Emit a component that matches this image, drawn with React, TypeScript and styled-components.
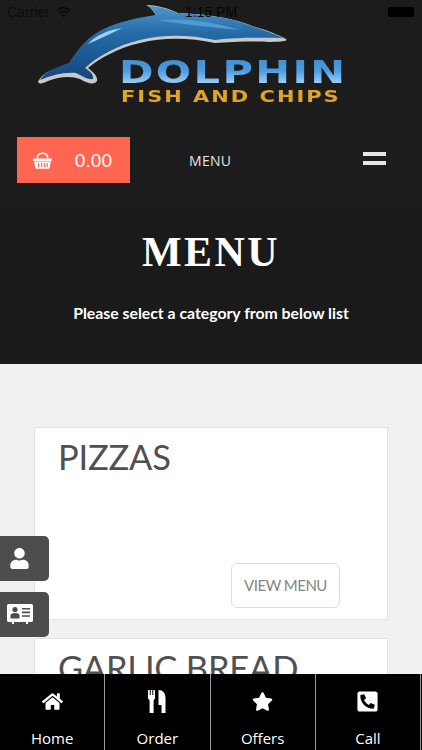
import React from "react";
import styled, { createGlobalStyle } from "styled-components";
import { FaHome, FaStar, FaUser, FaPhoneSquare } from "react-icons/fa";

const GlobalStyle = createGlobalStyle`
    html, body {
        margin: 0;
        padding: 0;
        background: #f1f1f1;
    }
    * {
        box-sizing: border-box;
    }
`;

const Page = styled.div`
    position: relative;
    width: 422px;
    height: 750px;
    overflow: hidden;
    font-family: Lato, "Liberation Sans", sans-serif;
`;

const StatusBar = styled.div`
    position: absolute;
    top: 0;
    left: 0;
    right: 0;
    height: 22px;
    display: grid;
    grid-template-columns: 1fr auto 1fr;
    align-items: center;
    padding: 2px 7px 0 7px;
    color: #050505;
    font-family: "Liberation Sans", sans-serif;
    font-size: 14px;
    z-index: 2;
`;

const Carrier = styled.div`
    display: flex;
    align-items: center;
    gap: 6px;
    color: #0c0c0c;
`;

const Battery = styled.div`
    justify-self: end;
    width: 26px;
    height: 10px;
    margin-right: 1px;
    background: #000;
    border-radius: 2px;
`;

const Header = styled.header`
    background: #1c1c1c;
    height: 206px;
    display: flex;
    flex-direction: column;
`;

const LogoArea = styled.div`
    position: relative;
    height: 137px;
    flex: none;
`;

const Dolphin = styled.svg`
    position: absolute;
    left: 34px;
    top: 0;
`;

const LogoName = styled.div`
    position: absolute;
    left: 119px;
    top: 57px;
    font-family: "DejaVu Sans", sans-serif;
    font-weight: 700;
    font-size: 32px;
    line-height: 30px;
    letter-spacing: 1.8px;
    white-space: nowrap;
    transform: scaleX(1.3);
    transform-origin: left center;
    background: linear-gradient(#3f8fd0, #4a9be0 45%, #b7dcf8);
    -webkit-background-clip: text;
    background-clip: text;
    color: transparent;
`;

const LogoTag = styled.div`
    position: absolute;
    left: 121px;
    top: 88px;
    font-family: "DejaVu Sans", sans-serif;
    font-weight: 700;
    font-size: 15.5px;
    line-height: 18px;
    letter-spacing: 1.5px;
    white-space: nowrap;
    transform: scaleX(1.35);
    transform-origin: left center;
    color: #e0a526;
`;

const NavRow = styled.div`
    display: grid;
    grid-template-columns: 113px 1fr 24px;
    align-items: center;
    margin: 0 35px 0 17px;
    height: 46px;
`;

const CartButton = styled.div`
    height: 46px;
    background: #ff6652;
    color: #fff;
    display: flex;
    align-items: center;
    padding-left: 16px;
    gap: 23px;
    font-size: 17.5px;
    letter-spacing: 0.8px;
`;

const NavLabel = styled.div`
    color: #e4e4e4;
    font-family: "Open Sans", sans-serif;
    font-size: 14px;
    letter-spacing: 0.3px;
    padding-left: 59px;
`;

const Burger = styled.div`
    display: flex;
    flex-direction: column;
    gap: 5px;
    margin-top: -4px;
`;

const BurgerBar = styled.span`
    display: block;
    height: 4px;
    width: 23px;
    background: #e6e6e6;
`;

const Hero = styled.section`
    background: #1a1a1a;
    height: 158px;
    color: #fff;
    text-align: center;
    padding-top: 21px;
`;

const HeroTitle = styled.h1`
    margin: 0;
    font-family: "Liberation Serif", serif;
    font-weight: 700;
    font-size: 42px;
    line-height: 50px;
    letter-spacing: 2.4px;
`;

const HeroText = styled.p`
    margin: 26px 0 0;
    font-size: 15.8px;
    line-height: 20px;
    font-weight: 700;
`;

const Content = styled.main`
    background: #f1f1f1;
    padding: 63px 34px 0;
    display: flex;
    flex-direction: column;
    gap: 18px;
`;

const Card = styled.article`
    position: relative;
    background: #fff;
    border: 1px solid #e2e2e2;
    height: 193px;
    padding: 7px 23px;
`;

const CardTitle = styled.h2`
    margin: 0;
    font-family: Lato, sans-serif;
    font-weight: 400;
    font-size: 34.5px;
    line-height: 44px;
    letter-spacing: -0.2px;
    color: #505050;
`;

const ViewButton = styled.div`
    position: absolute;
    right: 47px;
    bottom: 11px;
    width: 109px;
    height: 45px;
    padding-bottom: 2px;
    border: 1px solid #dedede;
    border-radius: 6px;
    display: flex;
    align-items: center;
    justify-content: center;
    font-size: 15px;
    letter-spacing: -0.5px;
    color: #858585;
`;

const SideTab = styled.div<{ $top: number }>`
    position: absolute;
    left: 0;
    top: ${(p) => p.$top}px;
    width: 49px;
    height: 45px;
    background: #4d4d4d;
    border-radius: 0 5px 5px 0;
    color: #fff;
    display: flex;
    align-items: center;
    justify-content: center;
    padding-right: 10px;
    font-size: 21px;
`;

const BottomNav = styled.nav`
    position: absolute;
    left: 0;
    right: 0;
    bottom: 0;
    height: 76px;
    background: #000;
    display: grid;
    grid-template-columns: repeat(4, 105.25px);
`;

const NavItem = styled.div`
    color: #fff;
    border-right: 1px solid #999;
    display: flex;
    flex-direction: column;
    align-items: center;
    font-family: "Open Sans", sans-serif;
    font-size: 15px;
`;

const NavIcon = styled.div`
    height: 54px;
    display: flex;
    align-items: center;
    justify-content: center;
    font-size: 21px;
`;

const CallIcon = styled(FaPhoneSquare)`
    transform: scaleX(-1);
`;

const NavText = styled.span`
    line-height: 20px;
`;

const WifiIcon = () => (
    <svg width="15" height="11" viewBox="0 0 15 11" fill="none" stroke="#0a0a0a" strokeWidth="1.7">
        <path d="M.8 3.6C4.5 0 10.5 0 14.2 3.6" />
        <path d="M3 6C5.4 3.8 9.6 3.8 12 6" />
        <path d="M7.5 10.6L5 8C6.4 6.9 8.6 6.9 10 8z" fill="#0a0a0a" stroke="none" />
    </svg>
);

const BasketIcon = () => (
    <svg width="19" height="17" viewBox="0 0 19 17" fill="#fff">
        <path d="M3.5 6.5C3.5 2.5 6 .5 9.5 .5S15.5 2.5 15.5 6.5H14C14 3.5 12.5 2 9.5 2S5 3.5 5 6.5z" />
        <path d="M.5 6.5h18a.5.5 0 0 1 .5.5v1.5a.5.5 0 0 1-.5.5H.5a.5.5 0 0 1-.5-.5V7a.5.5 0 0 1 .5-.5z" />
        <path
            fillRule="evenodd"
            d="M1.2 9.5h16.6l-1 6a1.5 1.5 0 0 1-1.5 1.2H3.7a1.5 1.5 0 0 1-1.5-1.2zM5 11v4h1.2v-4zM8 11v4h1.2v-4zM10.8 11v4H12v-4zM13.6 11v4h1.2v-4z"
        />
    </svg>
);

const ContactCardIcon = () => (
    <svg width="26" height="21" viewBox="0 0 26 21" fill="#fff">
        <path
            fillRule="evenodd"
            d="M1.5 0h23A1.5 1.5 0 0 1 26 1.5v15a1.5 1.5 0 0 1-1.5 1.5H21v2h-2v-2H7v2H5v-2H1.5A1.5 1.5 0 0 1 0 16.5v-15A1.5 1.5 0 0 1 1.5 0z"
        />
        <circle cx="8" cy="5.5" r="2.6" fill="#4d4d4d" />
        <path d="M3.5 14.5v-3c0-1.6 1.5-2.5 4.5-2.5s4.5 .9 4.5 2.5v3z" fill="#4d4d4d" />
        <path d="M15 4h8v1.6h-8zM15 7.6h8v1.6h-8zM15 11.2h8v1.6h-8z" fill="#4d4d4d" />
    </svg>
);

const ForkKnifeIcon = () => (
    <svg width="18" height="23" viewBox="0 0 18 23" fill="#fff">
        <path d="M0 0h1.7v5h1V0h1.6v5h1V0H7v8.5L5.6 10.5V23H1.6V10.5L0 8.5z" />
        <path d="M10.5 0C15 0 17.5 3 17.5 8V23h-4v-8h-3z" />
    </svg>
);

const items = [
    { label: "Home", icon: <FaHome /> },
    { label: "Order", icon: <ForkKnifeIcon /> },
    { label: "Offers", icon: <FaStar /> },
    { label: "Call", icon: <CallIcon size={23} /> },
];

export default function App() {
    return (
        <Page>
            <GlobalStyle />
            <StatusBar>
                <Carrier>
                    Carrier
                    <WifiIcon />
                </Carrier>
                <span>1:15 PM</span>
                <Battery />
            </StatusBar>

            <Header>
                <LogoArea>
                    <Dolphin width="260" height="90" viewBox="34 0 260 90">
                        <defs>
                            <linearGradient id="body" x1="0" y1="0" x2="0" y2="1">
                                <stop offset="0" stopColor="#4f97cc" />
                                <stop offset="0.35" stopColor="#266ca8" />
                                <stop offset="1" stopColor="#14457c" />
                            </linearGradient>
                        </defs>
                        <path
                            d="M38 82C42 72 56 68 68 65C78 50 88 36 105 29C120 22 135 19 156 16C154 11 150 7 146 5C156 5 168 8 178 13C205 14 235 18 252 26C265 30 277 34 286 39C288 41 284 42 270 42C250 41 232 42 215 43C190 38 165 37 140 43C118 48 100 58 88 68C93 72 98 76 97 81C95 85 88 84 80 79C72 76 60 76 48 81C43 84 38 84 38 82Z"
                            fill="#c8c8c8"
                        />
                        <path
                            d="M40 80C44 72 57 67 69 63C79 48 89 35 106 28C120 22 135 18 156 15C154 11 151 8 148 6C158 6 168 9 177 13C205 14 234 18 251 26C264 30 275 34 283 38C262 38 240 37 215 40C190 35 165 34 140 40C118 45 98 56 85 68C90 71 94 75 93 79C88 80 82 76 76 73C64 72 52 75 40 80Z"
                            fill="url(#body)"
                        />
                        <path d="M88 44C96 35 108 30 122 28C112 33 100 39 88 44Z" fill="#9fd0f0" />
                        <path d="M158 20C185 18 215 22 240 30C212 27 185 25 158 20Z" fill="#4f9bd6" />
                    </Dolphin>
                    <LogoName>DOLPHIN</LogoName>
                    <LogoTag>FISH AND CHIPS</LogoTag>
                </LogoArea>
                <NavRow>
                    <CartButton>
                        <BasketIcon />
                        0.00
                    </CartButton>
                    <NavLabel>MENU</NavLabel>
                    <Burger>
                        <BurgerBar />
                        <BurgerBar />
                    </Burger>
                </NavRow>
            </Header>

            <Hero>
                <HeroTitle>MENU</HeroTitle>
                <HeroText>Please select a category from below list</HeroText>
            </Hero>

            <Content>
                <Card>
                    <CardTitle>PIZZAS</CardTitle>
                    <ViewButton>VIEW MENU</ViewButton>
                </Card>
                <Card>
                    <CardTitle>GARLIC BREAD</CardTitle>
                </Card>
            </Content>

            <SideTab $top={536}>
                <FaUser />
            </SideTab>
            <SideTab $top={592}>
                <ContactCardIcon />
            </SideTab>

            <BottomNav>
                {items.map((item) => (
                    <NavItem key={item.label}>
                        <NavIcon>{item.icon}</NavIcon>
                        <NavText>{item.label}</NavText>
                    </NavItem>
                ))}
            </BottomNav>
        </Page>
    );
}
